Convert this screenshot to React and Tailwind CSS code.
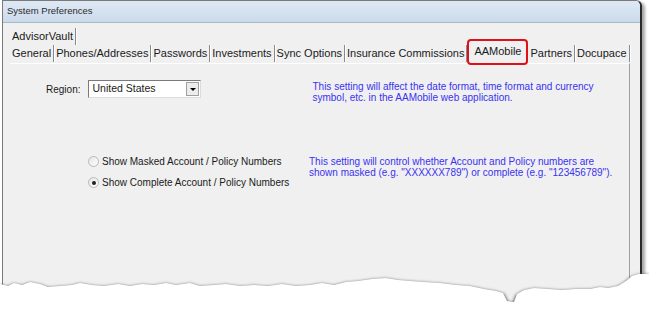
import React from "react";

const TABS = [
  "General",
  "Phones/Addresses",
  "Passwords",
  "Investments",
  "Sync Options",
  "Insurance Commissions",
  "AAMobile",
  "Partners",
  "Docupace",
];

const font = { fontFamily: '"Liberation Sans", Arial, sans-serif' };

const TORN =
  "M0 22 L8 24 L14 21 L22 23 L30 20 L40 22 L48 25 L60 24 L72 23 L80 21 L92 23 L104 24 L118 22 L130 24 L142 22 L154 23 L166 21 L176 23 L190 21 L200 24 L214 23 L226 22 L240 24 L254 23 L268 24 L282 22 L296 24 L310 23 L322 21 L334 23 L346 20 L358 19 L372 17 L386 16 L398 18 L410 19 L424 20 L440 21 L456 23 L470 24 L484 27 L496 29 L503 31 L507 39 L514 40 L517 32 L524 28 L534 26 L548 27 L562 28 L576 27 L590 27 L600 25 L608 26 L618 24 L626 19 L632 14 L638 12 L649 12";

function Tab({ label, active }) {
  if (active) {
    return (
      <div className="relative flex items-center h-[17px] px-[4px] mx-[3px]">
        <span className="absolute -inset-x-[3px] -top-[6px] -bottom-[3px] border-[2.5px] border-[#e0101a] rounded-[4px]" />
        <span className="relative -top-[2px]">{label}</span>
      </div>
    );
  }
  return (
    <div className="flex items-center h-[17px] px-[2px] border-r border-[#8a8a8a] shadow-[1px_0_0_#ffffff]">
      {label}
    </div>
  );
}

function Radio({ checked, label }) {
  return (
    <div className="flex items-center gap-[3px] h-[11px] whitespace-nowrap">
      <span className="w-[11px] h-[11px] rounded-full border border-[#b9b9b9] bg-gradient-to-br from-[#e4e4e4] to-white flex items-center justify-center">
        {checked && <span className="w-[4px] h-[4px] rounded-full bg-[#222]" />}
      </span>
      <span>{label}</span>
    </div>
  );
}

export default function App() {
  return (
    <div className="relative w-[649px] h-[316px] bg-white overflow-hidden text-[11px] text-[#1a1a1a]" style={font}>
      <div className="ml-[2px] w-[640px] h-[306px] flex flex-col border-l border-t border-[#7a7a7a] border-r-2 border-r-[#2a2a2a] rounded-tr-[6px] bg-[#f0f0f0] shadow-[3px_2px_3px_rgba(0,0,0,0.35)]">
        <div className="h-[22px] flex items-center pl-[4px] rounded-tr-[5px] bg-gradient-to-b from-[#dfe9f5] to-[#cbdaec] border-b border-[#a9b8c9] text-[9.5px] text-[#2b2b2b]">
          System Preferences
        </div>
        <div className="flex-1 flex flex-col pl-[7px] pr-[10px] pt-[5px]">
          <div className="flex h-[17px]">
            <Tab label="AdvisorVault" />
          </div>
          <div className="flex h-[17px]">
            {TABS.map((t) => (
              <Tab key={t} label={t} active={t === "AAMobile"} />
            ))}
          </div>
          <div className="flex-1 border-t border-white border-r border-r-[#a0a0a0] mt-[1px] text-[10px]">
            <div className="flex mt-[16px]">
              <div className="flex items-center gap-[8px] ml-[36px] h-[18px]">
                <span>Region:</span>
                <div className="w-[113px] h-[18px] flex items-center bg-white border border-[#7a7a7a] border-r-[#dcdcdc] border-b-[#dcdcdc]">
                  <span className="flex-1 pl-[3px] text-[10.5px]">United States</span>
                  <span className="w-[13px] h-[14px] mr-[1px] border border-[#a0a0a0] bg-[#ececec] flex items-center justify-center">
                    <span className="w-0 h-0 border-l-[3px] border-r-[3px] border-t-[3px] border-l-transparent border-r-transparent border-t-black" />
                  </span>
                </div>
              </div>
              <p className="ml-[111px] pt-[1px] leading-[11px] text-[#3a32f0]">
                This setting will affect the date format, time format and currency
                <br />
                symbol, etc. in the AAMobile web application.
              </p>
            </div>
            <div className="flex mt-[53px]">
              <div className="ml-[78px] flex flex-col gap-[10px] w-[221px] shrink-0">
                <Radio label="Show Masked Account / Policy Numbers" />
                <Radio checked label="Show Complete Account / Policy Numbers" />
              </div>
              <p className="leading-[11px] text-[#3a32f0] whitespace-nowrap">
                This setting will control whether Account and Policy numbers are
                <br />
                shown masked (e.g. "XXXXXX789") or complete (e.g. "123456789").
              </p>
            </div>
          </div>
        </div>
      </div>
      <svg className="absolute left-0 top-[262px]" width="649" height="54" viewBox="0 0 649 54">
        <defs>
          <filter id="sh" x="-5%" y="-50%" width="110%" height="200%">
            <feGaussianBlur stdDeviation="1.6" />
          </filter>
        </defs>
        <path d={TORN} fill="none" stroke="#555" strokeWidth="3" filter="url(#sh)" transform="translate(0 2)" />
        <path d={TORN + " L649 54 L0 54 Z"} fill="white" transform="translate(0 6)" />
        <path d={TORN + " L649 54 L0 54 Z"} fill="white" />
      </svg>
    </div>
  );
}
